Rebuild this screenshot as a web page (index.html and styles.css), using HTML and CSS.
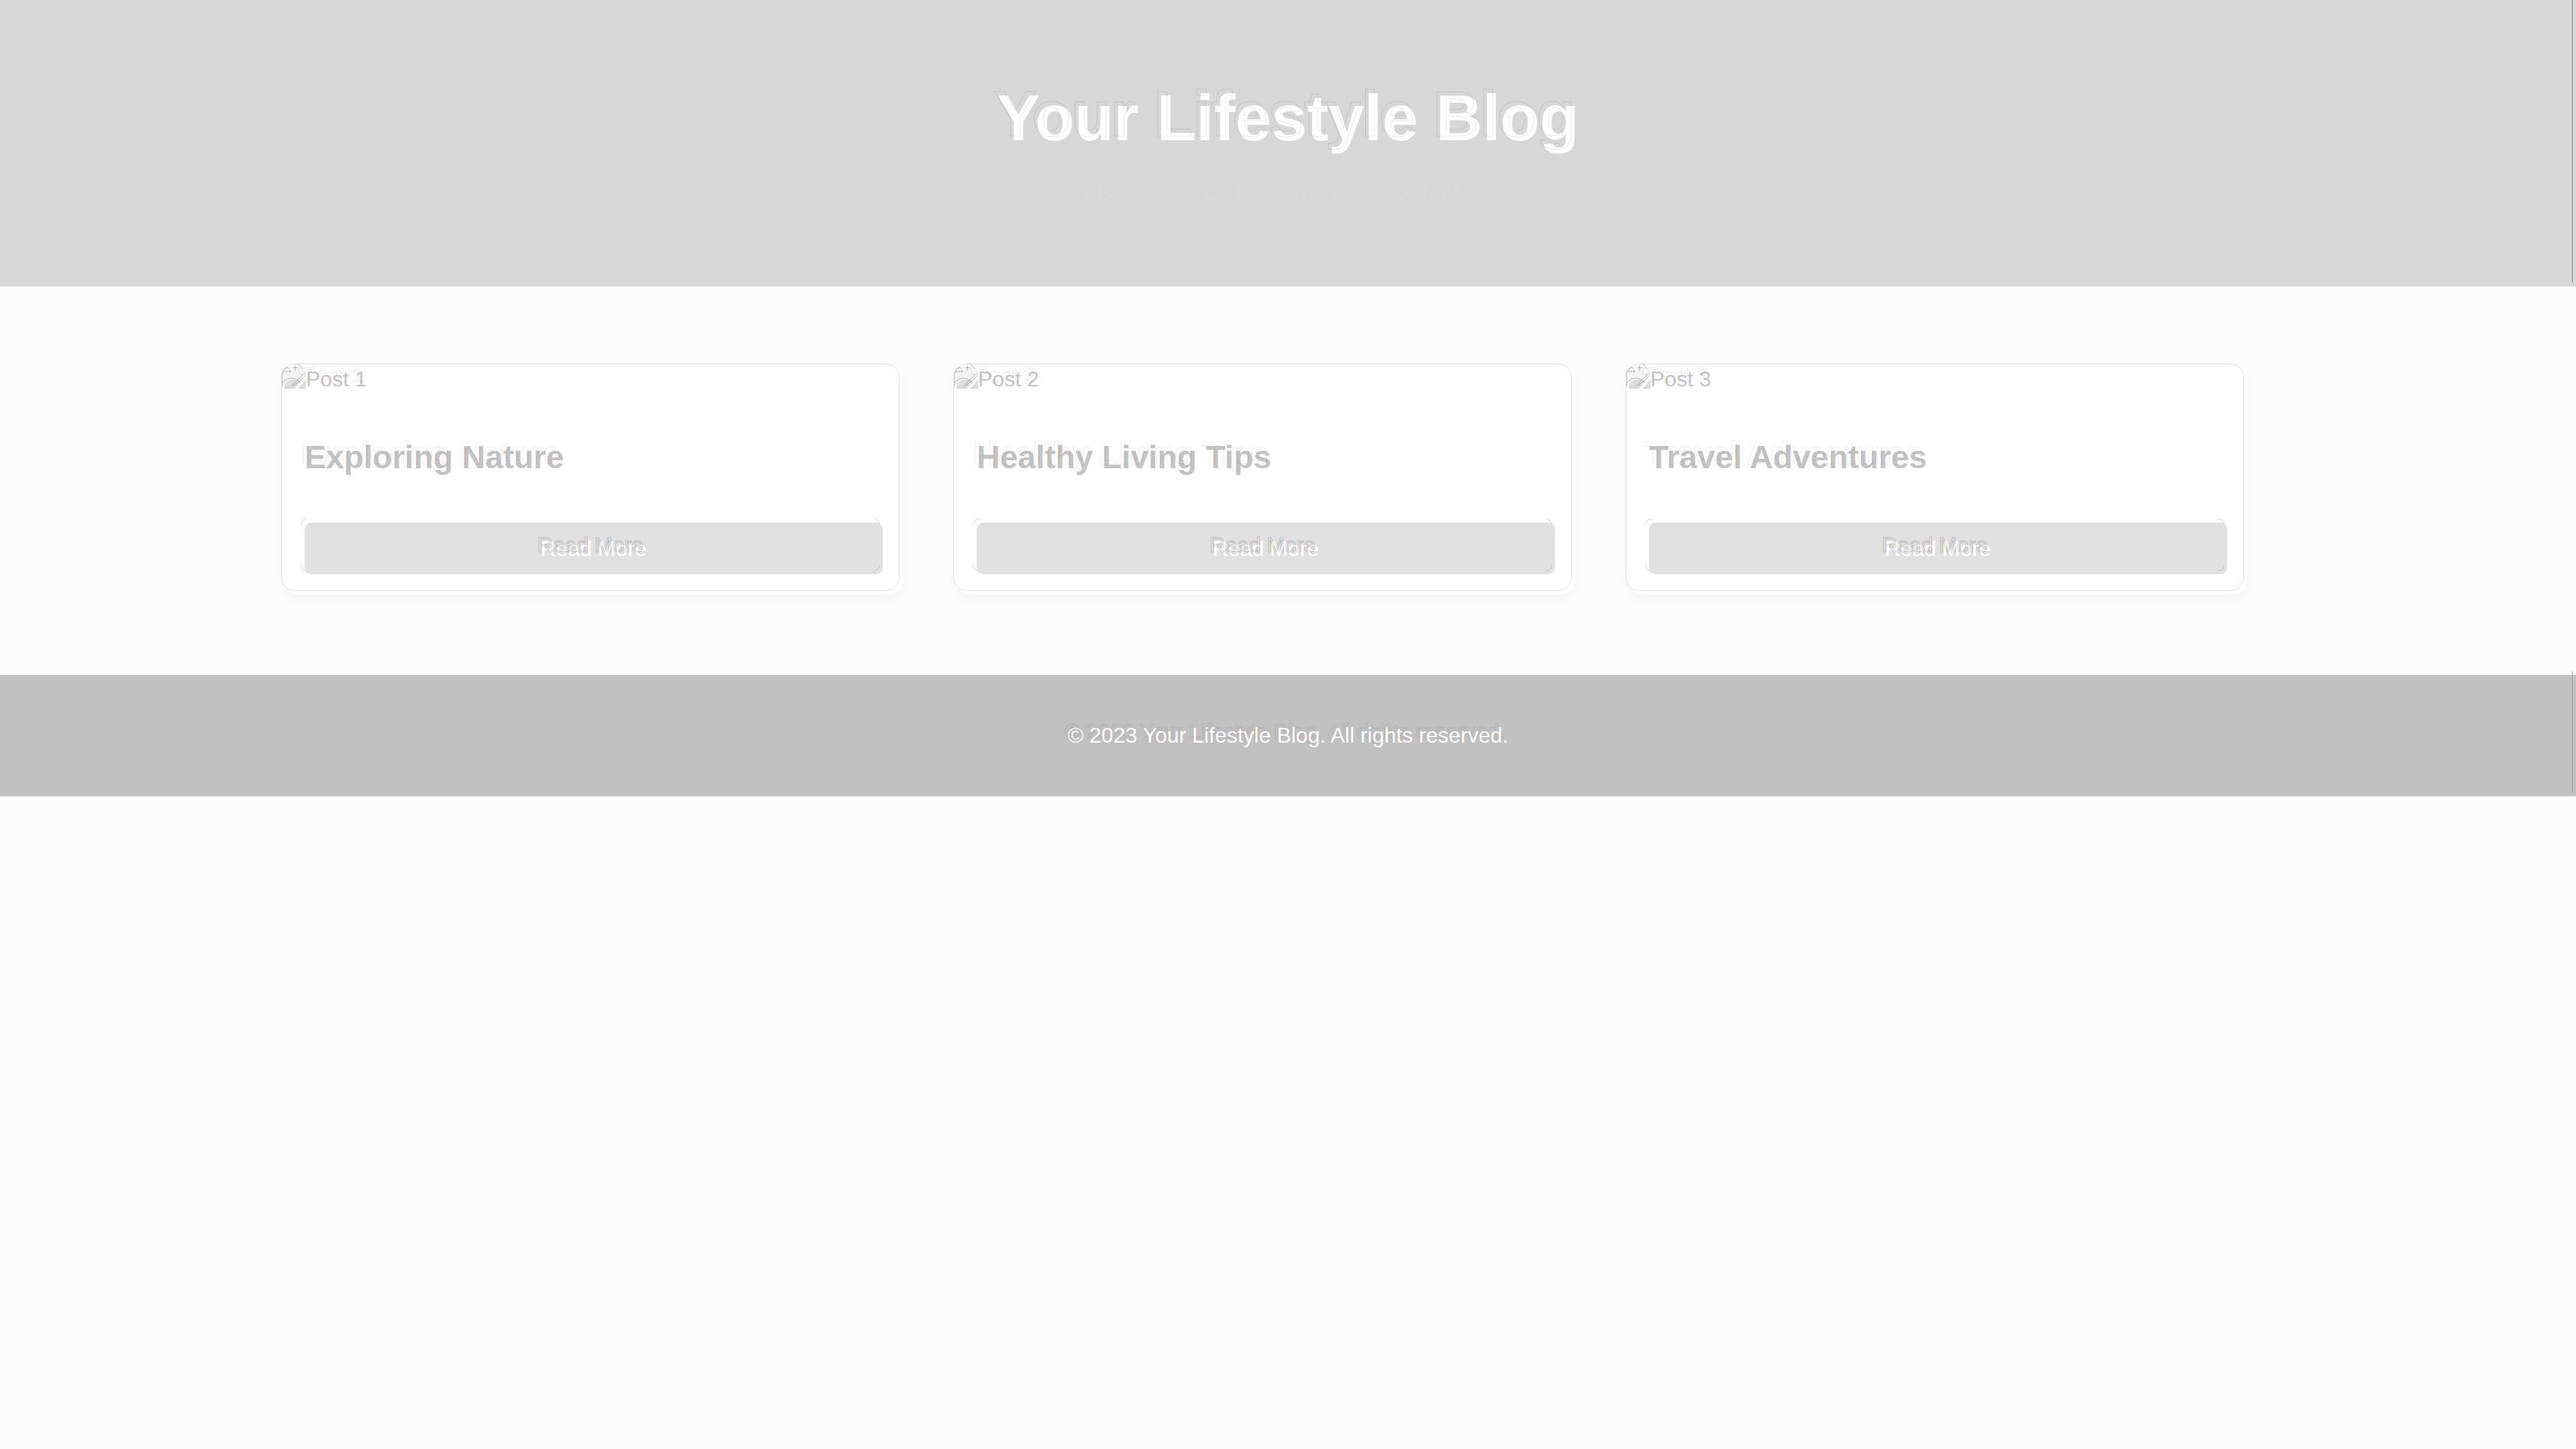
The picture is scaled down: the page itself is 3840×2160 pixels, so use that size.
FILE: index.html
```html
<!DOCTYPE html>
<html lang="en">
<head>
<meta charset="utf-8">
<title>Your Lifestyle Blog</title>
<link rel="stylesheet" href="styles.css">
</head>
<body>
<svg class="defs" aria-hidden="true">
  <symbol id="broken" viewBox="0 0 32 32">
    <path d="M0 0H22L32 10V15L15 32H0Z" fill="#f3f3f3"/>
    <path d="M22 0L32 10H22Z" fill="#fff" stroke="#e2e2e2"/>
    <path d="M0 26Q10 15 20 21L24 23L15 32H0Z" fill="#dedede"/>
    <path d="M32 20V32H20Z" fill="#dedede"/>
    <path d="M1 32H14M21 32H32" stroke="#c4c4c4" stroke-width="2"/>
    <path d="M4 5Q10 -2 12 6Z" fill="#fff"/>
  </symbol>
  <symbol id="broken-edge" viewBox="0 0 38 38">
    <path d="M3 13V36M4 13H15Q12 5 9 7Q6 8 4 13M3 29Q16 16 30 29M16 35L34 17M20 34L34 22M22 3V12M19 7H26M26 1L34 9" fill="none" stroke="#000" stroke-opacity=".28" stroke-width="1"/>
  </symbol>
</svg>
<header class="site-header">
  <h1 class="site-title echo" data-text="Your Lifestyle Blog">Your Lifestyle Blog</h1>
  <nav class="site-nav">
    <a href="#about">About</a>
    <a href="#categories">Categories</a>
    <a href="#contact">Contact</a>
  </nav>
</header>
<main class="posts">
  <article class="card">
    <div class="thumb"><svg class="icon" aria-hidden="true"><use href="#broken"/></svg><svg class="icon-edge" aria-hidden="true"><use href="#broken-edge"/></svg><span class="echo" data-text="Post 1">Post 1</span></div>
    <div class="card-body">
      <h2 class="card-title"><span class="echo" data-text="Exploring Nature">Exploring Nature</span></h2>
      <button class="more" type="button"><span class="echo" data-text="Read More">Read More</span></button>
    </div>
  </article>
  <article class="card">
    <div class="thumb"><svg class="icon" aria-hidden="true"><use href="#broken"/></svg><svg class="icon-edge" aria-hidden="true"><use href="#broken-edge"/></svg><span class="echo" data-text="Post 2">Post 2</span></div>
    <div class="card-body">
      <h2 class="card-title"><span class="echo" data-text="Healthy Living Tips">Healthy Living Tips</span></h2>
      <button class="more" type="button"><span class="echo" data-text="Read More">Read More</span></button>
    </div>
  </article>
  <article class="card">
    <div class="thumb"><svg class="icon" aria-hidden="true"><use href="#broken"/></svg><svg class="icon-edge" aria-hidden="true"><use href="#broken-edge"/></svg><span class="echo" data-text="Post 3">Post 3</span></div>
    <div class="card-body">
      <h2 class="card-title"><span class="echo" data-text="Travel Adventures">Travel Adventures</span></h2>
      <button class="more" type="button"><span class="echo" data-text="Read More">Read More</span></button>
    </div>
  </article>
</main>
<footer class="site-footer">
  <p class="echo" data-text="© 2023 Your Lifestyle Blog. All rights reserved.">© 2023 Your Lifestyle Blog. All rights reserved.</p>
</footer>
</body>
</html>
```
FILE: styles.css
```css
* { box-sizing: border-box; }
body {
  margin: 0;
  background: #fcfcfc;
  color: #c4c4c4;
  font-family: "Liberation Sans", Arial, sans-serif;
  font-size: 32px;
  line-height: 48px;
}
.defs { display: none; }
h1, h2, p { margin: 0; }

/* Thin outline of the text, lifted up and to the left of it */
.echo { position: relative; display: inline-block; }
.echo::after {
  content: attr(data-text);
  position: absolute;
  left: -5px;
  top: -6px;
  white-space: nowrap;
  color: transparent;
  -webkit-text-stroke: 1px rgba(0, 0, 0, .1);
}
.more .echo::after { -webkit-text-stroke-color: rgba(0, 0, 0, .2); }

.site-header {
  position: relative;
  display: flex;
  flex-direction: column;
  align-items: center;
  padding: 116px 0 115px;
  background: #d7d7d7;
}
.site-title {
  color: #fff;
  font-size: 96px;
  line-height: 120px;
}
.site-nav {
  display: flex;
  gap: 70px;
  padding-top: 28px;
  text-transform: uppercase;
}
.site-nav a { color: #d9d9d9; text-decoration: none; }
.site-header::after, .site-footer::after {
  content: "";
  position: absolute;
  right: 5px;
  top: 0;
  bottom: 6px;
  width: 1px;
  background: #808080;
}

.posts {
  display: grid;
  grid-template-columns: repeat(3, 1fr);
  gap: 80px;
  max-width: 2992px;
  margin: 0 auto;
  padding: 120px 66px 120px 0;
}
.card {
  position: relative;
  border-radius: 20px;
  background: #fff;
  box-shadow: 0 8px 20px rgba(0, 0, 0, .03);
}
.card::before {
  content: "";
  position: absolute;
  inset: -5px 5px 5px -5px;
  border: 1px solid #e2e2e2;
  border-radius: 20px;
}
.thumb { position: relative; display: flex; height: 32px; line-height: 36px; }
.icon { width: 32px; height: 32px; }
.icon-edge { position: absolute; left: -6px; top: -6px; width: 38px; height: 38px; }
.card-body {
  position: relative;
  display: flex;
  flex-direction: column;
  padding: 73px 30px 30px;
}
.card-title { padding-bottom: 67px; font-size: 48px; line-height: 60px; }
.more {
  position: relative;
  height: 77px;
  border: 0;
  border-radius: 10px;
  background: #e1e1e1;
  color: #fff;
  font: inherit;
}
/* Rounded corner marks beside the button's own corners */
.more::before {
  content: "";
  position: absolute;
  inset: -6px 4px 4px -6px;
  background:
    radial-gradient(circle at 100% 100%, transparent 9px, #bbb 9px, transparent 10px) 0 0,
    radial-gradient(circle at 0 100%, transparent 9px, #bbb 9px, transparent 10px) 100% 0,
    radial-gradient(circle at 100% 0, transparent 9px, #bbb 9px, transparent 10px) 0 100%,
    radial-gradient(circle at 0 0, transparent 9px, #aaa 9px, transparent 10px) 100% 100%;
  background-size: 10px 10px;
  background-repeat: no-repeat;
}
.site-footer {
  position: relative;
  padding: 66px 0 67px;
  background: #c1c1c1;
  color: #fff;
  text-align: center;
}
.site-footer::after { top: -5px; background: #a3a3a3; }
```
